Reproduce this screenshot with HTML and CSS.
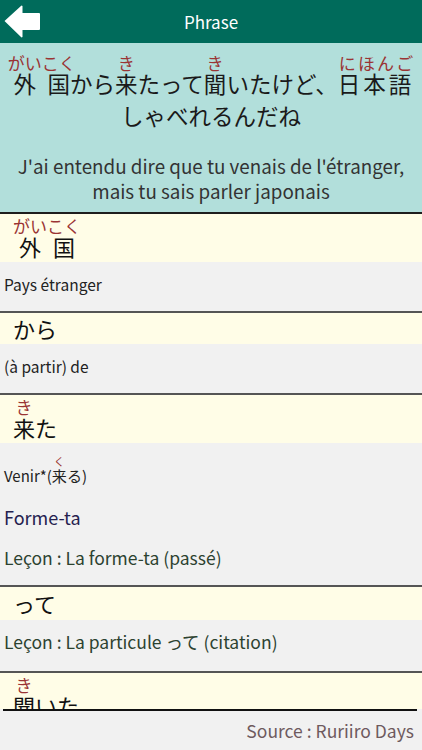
FILE: index.html
```html
<!DOCTYPE html>
<html lang="fr">
<head>
<meta charset="utf-8">
<title>Phrase</title>
<link rel="stylesheet" href="styles.css">
</head>
<body>
<div class="app">
  <header class="topbar">
    <span class="back" aria-label="Retour">
      <svg width="38" height="36" viewBox="0 0 38 36"><path d="M1.5 17 L18.5 1.5 L19.5 2 L19.5 9 L36 9 Q37 9 37 10 L37 25 Q37 26 36 26 L19.5 26 L19.5 33 L18.5 33.5 Z" fill="#ffffff"/></svg>
    </span>
    <h1 class="title">Phrase</h1>
    <span></span>
  </header>

  <section class="phrase">
    <p class="jp"><ruby>外国<rt>がいこく</rt></ruby>から<ruby>来<rt>き</rt></ruby>たって<ruby>聞<rt>き</rt></ruby>いたけど、<ruby><span class="spread">日本語</span><rt>にほんご</rt></ruby><br>しゃべれるんだね</p>
    <p class="fr">J'ai entendu dire que tu venais de l'étranger,<br>mais tu sais parler japonais</p>
  </section>

  <div class="words">
    <div class="entry">
      <div class="word with-ruby"><ruby>外国<rt>がいこく</rt></ruby></div>
      <div class="meanings">
        <div class="meaning">Pays étranger</div>
      </div>
    </div>
    <div class="entry">
      <div class="word">から</div>
      <div class="meanings">
        <div class="meaning">(à partir) de</div>
      </div>
    </div>
    <div class="entry">
      <div class="word with-ruby"><ruby>来<rt>き</rt></ruby>た</div>
      <div class="meanings">
        <div class="meaning with-ruby">Venir*(<ruby>来<rt>く</rt></ruby>る)</div>
        <div class="meaning form">Forme-ta</div>
        <div class="meaning lesson">Leçon : La forme-ta (passé)</div>
      </div>
    </div>
    <div class="entry">
      <div class="word tall">って</div>
      <div class="meanings">
        <div class="meaning lesson">Leçon : La particule って (citation)</div>
      </div>
    </div>
    <div class="entry">
      <div class="word with-ruby"><ruby>聞<rt>き</rt></ruby>いた</div>
    </div>
  </div>

  <footer class="footer">
    <div class="rule"></div>
    <div class="source">Source : Ruriiro Days</div>
  </footer>
</div>
</body>
</html>
```

FILE: styles.css
```css
* { box-sizing: border-box; }
html, body { margin: 0; padding: 0; }
body {
  font-family: "Noto Sans CJK JP", "Noto Sans", sans-serif;
  background: #f1f1f1;
}
.app {
  width: 422px;
  height: 750px;
  display: flex;
  flex-direction: column;
  overflow: hidden;
}
.topbar {
  height: 43px;
  flex: none;
  background: #006b5b;
  display: grid;
  grid-template-columns: 50px 1fr 50px;
  align-items: center;
}
.back {
  display: flex;
  padding-left: 3px;
  padding-top: 1px;
}
.title {
  margin: 0;
  text-align: center;
  color: #ffffff;
  font-size: 17px;
  font-weight: 400;
  line-height: 20px;
}
.phrase {
  flex: none;
  background: #b2dfdb;
  border-bottom: 2px solid #1e1e1e;
  text-align: center;
  padding: 12px 4px 9px;
}
.jp {
  margin: 0;
  font-size: 22.5px;
  line-height: 32px;
  color: #1a1a1a;
}
.spread {
  letter-spacing: 3px;
}
rt {
  font-size: 17px;
  letter-spacing: 0;
  color: #9a3434;
}
.fr {
  margin: 22px 0 0;
  font-size: 18.8px;
  line-height: 25px;
  color: #333333;
}
.words {
  flex: 1;
  overflow: hidden;
}
.entry {
  border-bottom: 2px solid #555555;
}
.word {
  background: #fffde7;
  font-size: 22px;
  line-height: 31px;
  color: #111111;
  padding: 0 13px;
}
.word.tall {
  line-height: 33px;
}
.word.with-ruby {
  padding-top: 17px;
}
.word rt {
  font-size: 17px;
}
.meanings {
  background: #f1f1f1;
  padding-bottom: 8px;
}
.meaning {
  font-size: 15.5px;
  line-height: 22px;
  padding: 11px 4px 8px;
  color: #222222;
}
.meaning.with-ruby {
  font-size: 15px;
  padding-top: 22px;
}
.meaning rt {
  font-size: 11px;
}
.meaning.form {
  font-size: 18px;
  color: #25214f;
}
.meaning.lesson {
  font-size: 17.5px;
  color: #2c4230;
}
.entry:nth-child(4) .meanings {
  padding-bottom: 10px;
}
.footer {
  flex: none;
  height: 41px;
  background: #f1f1f1;
  display: flex;
  flex-direction: column;
}
.rule {
  height: 2px;
  margin: 0 5px 0 3px;
  background: #111111;
}
.source {
  flex: 1;
  display: flex;
  align-items: center;
  justify-content: flex-end;
  padding-right: 8px;
  font-size: 17.5px;
  color: #6e5a5e;
}
```
